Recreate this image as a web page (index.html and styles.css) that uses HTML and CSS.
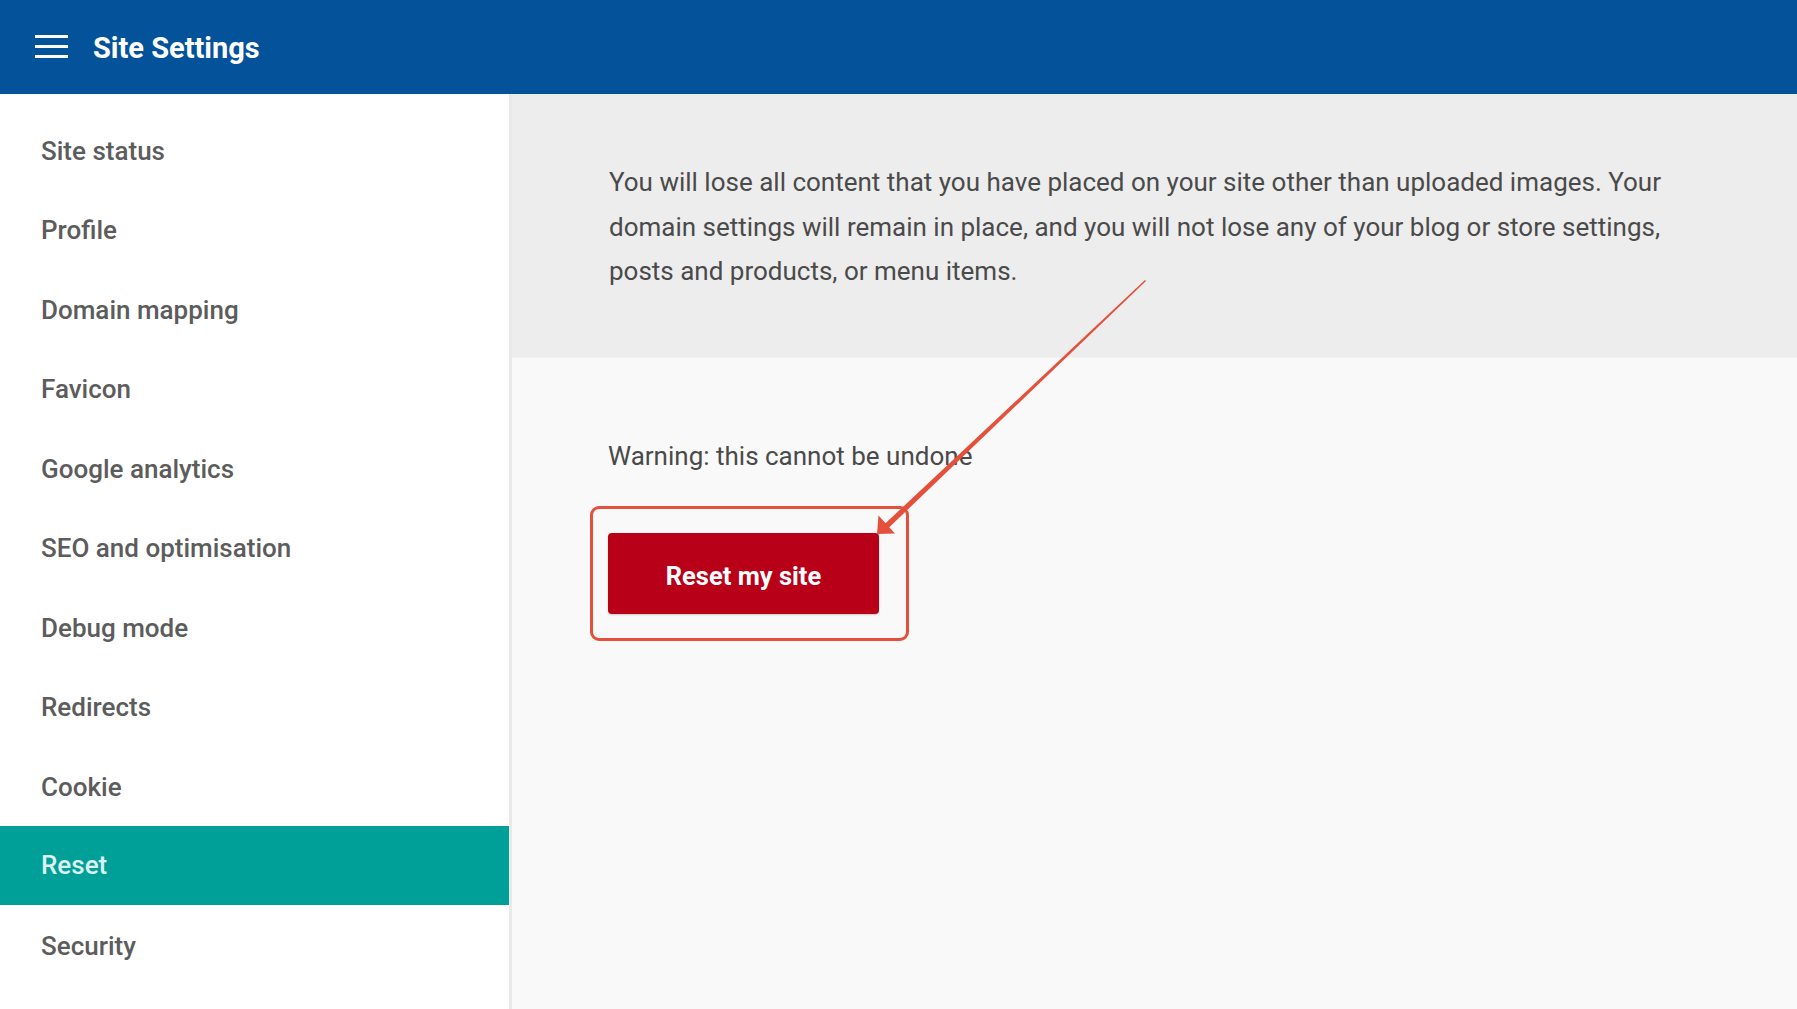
FILE: index.html
```html
<!DOCTYPE html>
<html lang="en">
<head>
<meta charset="utf-8">
<title>Site Settings</title>
<link rel="stylesheet" href="styles.css">
</head>
<body>
<header class="topbar">
  <span class="burger" aria-hidden="true"><i></i><i></i><i></i></span>
  <h1 class="title">Site Settings</h1>
</header>
<div class="main">
  <nav class="sidebar">
    <a class="nav-item">Site status</a>
    <a class="nav-item">Profile</a>
    <a class="nav-item">Domain mapping</a>
    <a class="nav-item">Favicon</a>
    <a class="nav-item">Google analytics</a>
    <a class="nav-item">SEO and optimisation</a>
    <a class="nav-item">Debug mode</a>
    <a class="nav-item">Redirects</a>
    <a class="nav-item">Cookie</a>
    <a class="nav-item active">Reset</a>
    <a class="nav-item">Security</a>
  </nav>
  <section class="content">
    <div class="intro">
      <p>You will lose all content that you have placed on your site other than uploaded images. Your domain settings will remain in place, and you will not lose any of your blog or store settings, posts and products, or menu items.</p>
    </div>
    <div class="action">
      <p class="warning">Warning: this cannot be undone</p>
      <div class="btn-wrap">
        <button class="reset-btn">Reset my site</button>
        <span class="highlight"></span>
      </div>
    </div>
  </section>
</div>
<svg class="arrow" width="1797" height="1009" viewBox="0 0 1797 1009" aria-hidden="true">
  <polygon points="1145,280 1146,281 888.2,528.3 884.4,524.3" fill="#e4503b"/>
  <polygon points="877,534 895,533.5 878.5,515.5" fill="#e4503b"/>
</svg>
</body>
</html>
```
FILE: styles.css
```css
html, body {
  margin: 0;
  padding: 0;
}
body {
  width: 1797px;
  height: 1009px;
  overflow: hidden;
  font-family: Roboto, "Liberation Sans", sans-serif;
  background: #f9f9f9;
  position: relative;
}
.topbar {
  height: 94px;
  background: #03529a;
  display: flex;
  align-items: center;
  padding-left: 35px;
  box-sizing: border-box;
}
.burger {
  display: flex;
  flex-direction: column;
  justify-content: space-between;
  width: 33px;
  height: 23px;
  margin-right: 25px;
  margin-top: -1px;
}
.burger i {
  display: block;
  height: 3px;
  background: #ffffff;
}
.title {
  margin: 0;
  color: #ffffff;
  font-size: 29px;
  font-weight: 700;
  margin-top: 1px;
}
.main {
  display: flex;
  height: 915px;
}
.sidebar {
  width: 509px;
  flex: none;
  background: #ffffff;
  border-right: 3px solid #e9e9e9;
  padding-top: 17px;
  box-sizing: content-box;
  display: flex;
  flex-direction: column;
}
.nav-item {
  height: 79.5px;
  flex: none;
  display: flex;
  align-items: center;
  padding-left: 41px;
  font-size: 26px;
  font-weight: 500;
  color: #5c5c5c;
  text-decoration: none;
}
.nav-item.active {
  background: #00a099;
  color: #dcf1f0;
  margin-top: -1px;
  margin-bottom: 1px;
}
.content {
  flex: 1;
  display: flex;
  flex-direction: column;
  background: #f9f9f9;
}
.intro {
  background: #ededed;
  height: 263px;
  box-sizing: border-box;
  padding: 66px 110px 0 97px;
}
.intro p {
  margin: 0;
  font-size: 26px;
  line-height: 44.7px;
  color: #4a4a4a;
}
.action {
  padding: 76px 0 0 96px;
  border-top: 1px solid #f3f3f3;
}
.warning {
  margin: 0;
  font-size: 26px;
  line-height: 44.7px;
  color: #4a4a4a;
}
.btn-wrap {
  position: relative;
  display: inline-block;
  margin-top: 54px;
}
.reset-btn {
  display: block;
  width: 271px;
  height: 81px;
  border: none;
  border-radius: 4px;
  background: #b80019;
  color: #ffffff;
  font-family: Roboto, "Liberation Sans", sans-serif;
  font-size: 25.5px;
  font-weight: 700;
  box-shadow: 0 1px 2px rgba(0,0,0,0.2);
  padding: 5px 0 0 0;
}
.highlight {
  position: absolute;
  left: -18px;
  top: -27px;
  right: -30px;
  bottom: -27px;
  border: 3px solid #e4503b;
  border-radius: 9px;
}
.arrow {
  position: absolute;
  left: 0;
  top: 0;
  pointer-events: none;
}
```
